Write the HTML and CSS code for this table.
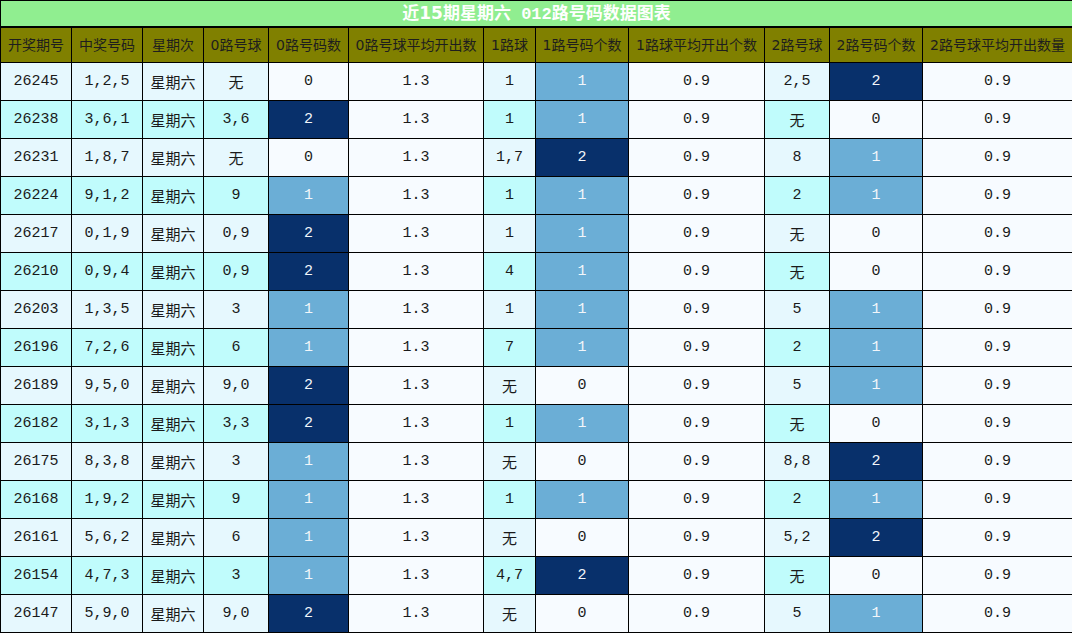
FILE: index.html
```html
<!DOCTYPE html>
<html lang="zh-CN">
<head>
<meta charset="utf-8">
<title>近15期星期六 012路号码数据图表</title>
<link rel="stylesheet" href="styles.css">
</head>
<body>
<table class="chart">
<colgroup>
<col class="w71"><col class="w71"><col class="w61"><col class="w65"><col class="w80"><col class="w135"><col class="w52"><col class="w93"><col class="w136"><col class="w65"><col class="w93"><col class="w150">
</colgroup>
<thead>
<tr class="title"><th colspan="12"><span class="t-sans">近15期星期六</span><span class="t-mono"> 012</span><span class="t-sans">路号码数据图表</span></th></tr>
<tr class="head">
<th>开奖期号</th><th>中奖号码</th><th>星期次</th><th>0路号球</th><th>0路号码数</th><th>0路号球平均开出数</th><th>1路球</th><th>1路号码个数</th><th>1路球平均开出个数</th><th>2路号球</th><th>2路号码个数</th><th>2路号球平均开出数量</th>
</tr>
</thead>
<tbody>
<tr class="odd"><td class="b">26245</td><td class="b">1,2,5</td><td class="b cn">星期六</td><td class="b cn">无</td><td class="c0">0</td><td class="avg">1.3</td><td class="b">1</td><td class="c1">1</td><td class="avg">0.9</td><td class="b">2,5</td><td class="c2">2</td><td class="avg">0.9</td></tr>
<tr class="even"><td class="b">26238</td><td class="b">3,6,1</td><td class="b cn">星期六</td><td class="b">3,6</td><td class="c2">2</td><td class="avg">1.3</td><td class="b">1</td><td class="c1">1</td><td class="avg">0.9</td><td class="b cn">无</td><td class="c0">0</td><td class="avg">0.9</td></tr>
<tr class="odd"><td class="b">26231</td><td class="b">1,8,7</td><td class="b cn">星期六</td><td class="b cn">无</td><td class="c0">0</td><td class="avg">1.3</td><td class="b">1,7</td><td class="c2">2</td><td class="avg">0.9</td><td class="b">8</td><td class="c1">1</td><td class="avg">0.9</td></tr>
<tr class="even"><td class="b">26224</td><td class="b">9,1,2</td><td class="b cn">星期六</td><td class="b">9</td><td class="c1">1</td><td class="avg">1.3</td><td class="b">1</td><td class="c1">1</td><td class="avg">0.9</td><td class="b">2</td><td class="c1">1</td><td class="avg">0.9</td></tr>
<tr class="odd"><td class="b">26217</td><td class="b">0,1,9</td><td class="b cn">星期六</td><td class="b">0,9</td><td class="c2">2</td><td class="avg">1.3</td><td class="b">1</td><td class="c1">1</td><td class="avg">0.9</td><td class="b cn">无</td><td class="c0">0</td><td class="avg">0.9</td></tr>
<tr class="even"><td class="b">26210</td><td class="b">0,9,4</td><td class="b cn">星期六</td><td class="b">0,9</td><td class="c2">2</td><td class="avg">1.3</td><td class="b">4</td><td class="c1">1</td><td class="avg">0.9</td><td class="b cn">无</td><td class="c0">0</td><td class="avg">0.9</td></tr>
<tr class="odd"><td class="b">26203</td><td class="b">1,3,5</td><td class="b cn">星期六</td><td class="b">3</td><td class="c1">1</td><td class="avg">1.3</td><td class="b">1</td><td class="c1">1</td><td class="avg">0.9</td><td class="b">5</td><td class="c1">1</td><td class="avg">0.9</td></tr>
<tr class="even"><td class="b">26196</td><td class="b">7,2,6</td><td class="b cn">星期六</td><td class="b">6</td><td class="c1">1</td><td class="avg">1.3</td><td class="b">7</td><td class="c1">1</td><td class="avg">0.9</td><td class="b">2</td><td class="c1">1</td><td class="avg">0.9</td></tr>
<tr class="odd"><td class="b">26189</td><td class="b">9,5,0</td><td class="b cn">星期六</td><td class="b">9,0</td><td class="c2">2</td><td class="avg">1.3</td><td class="b cn">无</td><td class="c0">0</td><td class="avg">0.9</td><td class="b">5</td><td class="c1">1</td><td class="avg">0.9</td></tr>
<tr class="even"><td class="b">26182</td><td class="b">3,1,3</td><td class="b cn">星期六</td><td class="b">3,3</td><td class="c2">2</td><td class="avg">1.3</td><td class="b">1</td><td class="c1">1</td><td class="avg">0.9</td><td class="b cn">无</td><td class="c0">0</td><td class="avg">0.9</td></tr>
<tr class="odd"><td class="b">26175</td><td class="b">8,3,8</td><td class="b cn">星期六</td><td class="b">3</td><td class="c1">1</td><td class="avg">1.3</td><td class="b cn">无</td><td class="c0">0</td><td class="avg">0.9</td><td class="b">8,8</td><td class="c2">2</td><td class="avg">0.9</td></tr>
<tr class="even"><td class="b">26168</td><td class="b">1,9,2</td><td class="b cn">星期六</td><td class="b">9</td><td class="c1">1</td><td class="avg">1.3</td><td class="b">1</td><td class="c1">1</td><td class="avg">0.9</td><td class="b">2</td><td class="c1">1</td><td class="avg">0.9</td></tr>
<tr class="odd"><td class="b">26161</td><td class="b">5,6,2</td><td class="b cn">星期六</td><td class="b">6</td><td class="c1">1</td><td class="avg">1.3</td><td class="b cn">无</td><td class="c0">0</td><td class="avg">0.9</td><td class="b">5,2</td><td class="c2">2</td><td class="avg">0.9</td></tr>
<tr class="even"><td class="b">26154</td><td class="b">4,7,3</td><td class="b cn">星期六</td><td class="b">3</td><td class="c1">1</td><td class="avg">1.3</td><td class="b">4,7</td><td class="c2">2</td><td class="avg">0.9</td><td class="b cn">无</td><td class="c0">0</td><td class="avg">0.9</td></tr>
<tr class="odd"><td class="b">26147</td><td class="b">5,9,0</td><td class="b cn">星期六</td><td class="b">9,0</td><td class="c2">2</td><td class="avg">1.3</td><td class="b cn">无</td><td class="c0">0</td><td class="avg">0.9</td><td class="b">5</td><td class="c1">1</td><td class="avg">0.9</td></tr>
</tbody>
</table>
</body>
</html>
```
FILE: styles.css
```css
html, body {
  margin: 0;
  padding: 0;
  background: #ffffff;
}
.chart {
  width: 1072px;
  border-collapse: collapse;
  table-layout: fixed;
  font-family: "Liberation Mono", "Noto Sans CJK SC", monospace;
  font-size: 15px;
  color: #1a1a1a;
}
.w71 { width: 71px; }
.w61 { width: 61px; }
.w65 { width: 65px; }
.w80 { width: 80px; }
.w135 { width: 135px; }
.w52 { width: 52px; }
.w93 { width: 93px; }
.w136 { width: 136px; }
.w150 { width: 150px; }
.chart th, .chart td {
  border: 1px solid #000;
  padding: 0;
  text-align: center;
  white-space: nowrap;
  overflow: hidden;
}
.title th {
  height: 24px;
  background: #90ee90;
  color: #ffffff;
  font-size: 17px;
  font-weight: bold;
  border-bottom: 2px solid #000;
  line-height: 16px;
  padding-top: 1px;
}
.t-sans {
  font-family: "DejaVu Sans", "Noto Sans CJK SC", sans-serif;
}
.t-mono {
  font-family: "Liberation Mono", "Noto Sans CJK SC", monospace;
  white-space: pre;
}
.head th {
  height: 34px;
  background: #808000;
  color: #1e1e1e;
  font-family: "DejaVu Sans", "Noto Sans CJK SC", sans-serif;
  font-weight: normal;
  font-size: 14px;
  line-height: 16px;
}
.chart td {
  height: 37px;
  line-height: 18px;
}
.cn {
  font-family: "Noto Sans CJK SC", sans-serif;
  font-size: 15px;
  padding-top: 3px;
}
.odd .b { background: #e6f8fe; }
.even .b { background: #c0fcfc; }
.avg, .c0 { background: #f7fbff; }
.c1 { background: #6baed6; color: #f2f6fa; }
.c2 { background: #08306b; color: #f2f6fa; }
```
